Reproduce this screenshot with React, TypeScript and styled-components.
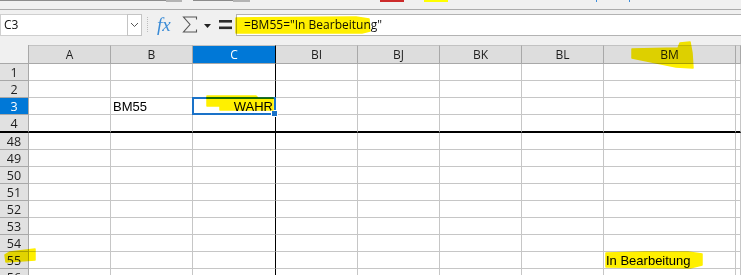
import React from 'react'
import styled, { createGlobalStyle } from 'styled-components'

const GlobalStyle = createGlobalStyle`
  html, body {
    margin: 0;
    padding: 0;
    background: #f0f0f0;
  }
  body {
    font-family: "Liberation Sans", Arial, sans-serif;
  }
`

const UI_FONT = `"Open Sans", "Noto Sans", sans-serif`
const MARK = '#fff000'

const Window = styled.div`
  width: 741px;
  height: 275px;
  overflow: hidden;
  background: #f0f0f0;
  display: flex;
  flex-direction: column;
`

const ToolbarEdge = styled.div`
  height: 9px;
  flex-shrink: 0;
  display: flex;
  align-items: flex-start;
  border-bottom: 1px solid #ababab;
`

const Sliver = styled.span<{ $w: number; $ml?: number; $h?: number; $c: string }>`
  display: block;
  width: ${p => p.$w}px;
  height: ${p => p.$h ?? 2}px;
  margin-left: ${p => p.$ml ?? 0}px;
  background: ${p => p.$c};
`

const FormulaBar = styled.div`
  height: 26px;
  flex-shrink: 0;
  display: flex;
  align-items: flex-start;
  padding-top: 4px;
  box-sizing: border-box;
`

const NameBox = styled.div`
  width: 142px;
  height: 22px;
  box-sizing: border-box;
  display: flex;
  background: #fff;
  border: 1px solid #cfcfcf;
  border-right: none;
`

const NameText = styled.div`
  flex: 1;
  padding-left: 3px;
  font: 12px ${UI_FONT};
  color: #111;
  line-height: 20px;
`

const DropButton = styled.div`
  width: 15px;
  box-sizing: border-box;
  border: 1px solid #c4c4c4;
  margin: -1px 0;
  display: flex;
  align-items: center;
  justify-content: center;
  background: #fff;
`

const Separator = styled.div`
  width: 0;
  height: 15px;
  margin: 3px 0 0 5px;
  border-left: 1px dotted #bdbdbd;
`

const FxIcon = styled.div`
  width: 17px;
  margin-left: 9px;
  font: italic 19px "Liberation Serif", "DejaVu Serif", serif;
  color: #3a8bd6;
  line-height: 22px;
  white-space: nowrap;
`

const ToolIcon = styled.svg<{ $ml: number }>`
  display: block;
  margin-left: ${p => p.$ml}px;
  flex-shrink: 0;
`

const FormulaInput = styled.div`
  flex: 1;
  margin-left: 4px;
  height: 22px;
  box-sizing: border-box;
  border: 1px solid #b3b3b3;
  border-right: none;
  background: #fff;
  position: relative;
  padding-left: 7px;
  font: 12px ${UI_FONT};
  line-height: 20px;
  color: #111;
`

const FormulaText = styled.span`
  position: relative;
`

const Gap = styled.div`
  height: 9px;
  flex-shrink: 0;
`

const Sheet = styled.div`
  display: grid;
  grid-template-columns: 29px 82px 82px 83px 82px 82px 82px 82px 132px 1fr;
  background: #fff;
`

const Corner = styled.div`
  height: 19px;
  box-sizing: border-box;
  background: #f0f0f0;
  border-right: 1px solid #a8a8a8;
  border-bottom: 1px solid #a8a8a8;
`

const ColHead = styled.div<{ $selected?: boolean; $freeze?: boolean }>`
  position: relative;
  height: 19px;
  box-sizing: border-box;
  border-top: 1px solid #c2c2c2;
  border-bottom: 1px solid #a8a8a8;
  border-right: 1px solid ${p => (p.$freeze ? '#000' : '#a8a8a8')};
  background: ${p => (p.$selected ? '#0078d7' : '#dddddd')};
  color: ${p => (p.$selected ? '#fff' : '#1e1e1e')};
  font: 12px ${UI_FONT};
  display: flex;
  align-items: center;
  justify-content: center;
`

const RowHead = styled.div<{ $selected?: boolean; $freeze?: boolean }>`
  position: relative;
  height: ${p => (p.$freeze ? 18 : 17)}px;
  box-sizing: border-box;
  border-right: 1px solid #a8a8a8;
  border-bottom: ${p => (p.$freeze ? '2px solid #000' : '1px solid #a8a8a8')};
  background: ${p => (p.$selected ? '#0078d7' : '#e1e1e1')};
  color: ${p => (p.$selected ? '#fff' : '#1e1e1e')};
  font: 12.5px ${UI_FONT};
  display: flex;
  align-items: center;
  justify-content: center;
`

const Cell = styled.div<{ $freezeCol?: boolean; $freezeRow?: boolean; $align?: string }>`
  position: relative;
  height: ${p => (p.$freezeRow ? 18 : 17)}px;
  box-sizing: border-box;
  border-right: 1px solid ${p => (p.$freezeCol ? '#000' : '#c6c6c6')};
  border-bottom: ${p => (p.$freezeRow ? '2px solid #000' : '1px solid #c6c6c6')};
  padding: 0 2px;
  font-size: 13px;
  color: #000;
  display: flex;
  align-items: center;
  justify-content: ${p => (p.$align === 'right' ? 'flex-end' : 'flex-start')};
  white-space: nowrap;
`

const Selection = styled.div`
  position: absolute;
  left: -1px;
  top: -1px;
  right: -1px;
  bottom: -1px;
  border: 2px solid #1a72c8;
  z-index: 3;
  pointer-events: none;
`

const Handle = styled.div`
  position: absolute;
  right: -4px;
  bottom: -4px;
  width: 5px;
  height: 5px;
  background: #1a72c8;
  border: 1px solid #fff;
`

const Marker = styled.svg<{ $x: number; $y: number }>`
  position: absolute;
  left: ${p => p.$x}px;
  top: ${p => p.$y}px;
  overflow: visible;
  mix-blend-mode: multiply;
  pointer-events: none;
  z-index: 4;
`

const Mark = ({ x, y, w, h, points }: { x: number; y: number; w: number; h: number; points: string }) => (
  <Marker $x={x} $y={y} width={w} height={h} viewBox={`0 0 ${w} ${h}`}>
    <polygon points={points} fill={MARK} strokeLinejoin="round" stroke={MARK} strokeWidth={1.5} />
  </Marker>
)

type Col = { label: string; selected?: boolean; freeze?: boolean }

const columns: Col[] = [
  { label: 'A' },
  { label: 'B' },
  { label: 'C', selected: true, freeze: true },
  { label: 'BI' },
  { label: 'BJ' },
  { label: 'BK' },
  { label: 'BL' },
  { label: 'BM' },
  { label: '' },
]

const rows = [1, 2, 3, 4, 48, 49, 50, 51, 52, 53, 54, 55, 56]

const renderCell = (row: number, col: Col) => {
  if (row === 3 && col.label === 'B') return 'BM55'
  if (row === 3 && col.label === 'C')
    return (
      <>
        WAHR
        <Mark x={-2} y={-3} w={84} h={18} points="16,1 65,1 67,3 82,3 82,15 29,15 29,11 16,11" />
        <Selection>
          <Handle />
        </Selection>
      </>
    )
  if (row === 55 && col.label === 'BM')
    return (
      <>
        In Bearbeitung
        <Mark x={0} y={-1} w={100} h={18} points="2,2 40,1 84,1 98,3 98,14 86,17 2,16" />
      </>
    )
  return null
}

export default function App() {
  return (
    <Window>
      <GlobalStyle />
      <ToolbarEdge>
        <Sliver $w={166} $h={1} $c="#8c8c8c" />
        <Sliver $w={16} $c="#b4b4b4" />
        <Sliver $ml={11} $w={40} $h={1} $c="#8c8c8c" />
        <Sliver $w={17} $c="#b4b4b4" />
        <Sliver $ml={130} $w={24} $c="#cc2a2a" />
        <Sliver $ml={20} $w={24} $c="#ffff00" />
        <Sliver $ml={148} $w={1} $c="#3c8ddd" />
        <Sliver $ml={32} $w={1} $c="#3c8ddd" />
      </ToolbarEdge>

      <FormulaBar>
        <NameBox>
          <NameText>C3</NameText>
          <DropButton>
            <svg width="9" height="6" viewBox="0 0 9 6">
              <polyline points="1,1 4.5,4.5 8,1" fill="none" stroke="#555" strokeWidth="1" />
            </svg>
          </DropButton>
        </NameBox>
        <Separator />
        <FxIcon>fx</FxIcon>
        <ToolIcon $ml={8} width="16" height="22" viewBox="0 0 16 22">
          <path
            d="M14.5 5.5 V3 H1.5 L8 10.5 L1.5 18 H14.5 V15.5"
            fill="none"
            stroke="#555"
            strokeWidth="1.1"
            strokeLinejoin="miter"
          />
        </ToolIcon>
        <ToolIcon $ml={6} width="7" height="22" viewBox="0 0 7 22">
          <polygon points="0,10 7,10 3.5,14" fill="#222" />
        </ToolIcon>
        <ToolIcon $ml={8} width="13" height="22" viewBox="0 0 13 22">
          <rect x="0" y="6" width="13" height="2.6" fill="#2b2b2b" />
          <rect x="0" y="12.5" width="13" height="2.6" fill="#2b2b2b" />
        </ToolIcon>
        <FormulaInput>
          <Mark x={-1} y={0} w={140} h={20} points="0,3 120,2 133,4 134,16 126,18 0,18" />
          <FormulaText>=BM55="In Bearbeitung"</FormulaText>
        </FormulaInput>
      </FormulaBar>

      <Gap />

      <Sheet>
        <Corner />
        {columns.map((c, i) => (
          <ColHead key={i} $selected={c.selected} $freeze={c.freeze}>
            {c.label}
            {c.label === 'BM' && (
              <Mark x={0} y={-6} w={100} h={32} points="28,9 74,8 76,3 86,2 88,13 89,28 72,27 28,18" />
            )}
          </ColHead>
        ))}
        {rows.map(r => (
          <React.Fragment key={r}>
            <RowHead $selected={r === 3} $freeze={r === 4}>
              {r}
              {r === 55 && <Mark x={0} y={-4} w={40} h={16} points="10,4 35,1 35,12 6,14 5,7" />}
            </RowHead>
            {columns.map((c, i) => (
              <Cell
                key={i}
                $freezeCol={c.freeze}
                $freezeRow={r === 4}
                $align={c.label === 'C' ? 'right' : 'left'}
              >
                {renderCell(r, c)}
              </Cell>
            ))}
          </React.Fragment>
        ))}
      </Sheet>
    </Window>
  )
}
